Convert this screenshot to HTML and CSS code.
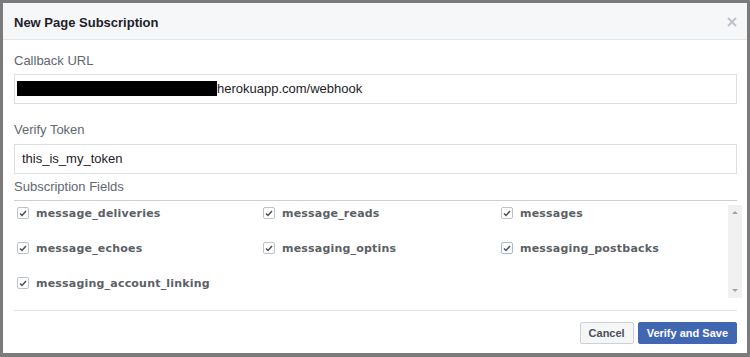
FILE: index.html
```html
<!DOCTYPE html>
<html lang="en">
<head>
    <meta charset="UTF-8">
    <title>New Page Subscription</title>
    <link rel="stylesheet" href="styles.css">
</head>
<body>
    <div class="dialog">
        <div class="dialog-header">
            <h1>New Page Subscription</h1>
            <svg class="close" width="10" height="10" viewBox="0 0 10 10">
                <path d="M1 1L9 9M9 1L1 9" stroke="#bec2c9" stroke-width="2"/>
            </svg>
        </div>

        <div class="dialog-body">
            <label class="field-label first">Callback URL</label>
            <div class="text-input"><span class="redacted"></span>herokuapp.com/webhook</div>

            <label class="field-label token">Verify Token</label>
            <div class="text-input">this_is_my_token</div>

            <div class="section-label">Subscription Fields</div>

            <div class="fields-scroll">
                <div class="fields-grid">
                    <div class="field"><span class="checkbox"><svg width="8" height="7" viewBox="0 0 8 7"><path d="M1 3.5L3 5.5L7 1" fill="none" stroke="#4b4f56" stroke-width="1.5"/></svg></span>message_deliveries</div>
                    <div class="field"><span class="checkbox"><svg width="8" height="7" viewBox="0 0 8 7"><path d="M1 3.5L3 5.5L7 1" fill="none" stroke="#4b4f56" stroke-width="1.5"/></svg></span>message_reads</div>
                    <div class="field"><span class="checkbox"><svg width="8" height="7" viewBox="0 0 8 7"><path d="M1 3.5L3 5.5L7 1" fill="none" stroke="#4b4f56" stroke-width="1.5"/></svg></span>messages</div>
                    <div class="field"><span class="checkbox"><svg width="8" height="7" viewBox="0 0 8 7"><path d="M1 3.5L3 5.5L7 1" fill="none" stroke="#4b4f56" stroke-width="1.5"/></svg></span>message_echoes</div>
                    <div class="field"><span class="checkbox"><svg width="8" height="7" viewBox="0 0 8 7"><path d="M1 3.5L3 5.5L7 1" fill="none" stroke="#4b4f56" stroke-width="1.5"/></svg></span>messaging_optins</div>
                    <div class="field"><span class="checkbox focused"><svg width="8" height="7" viewBox="0 0 8 7"><path d="M1 3.5L3 5.5L7 1" fill="none" stroke="#4b4f56" stroke-width="1.5"/></svg></span>messaging_postbacks</div>
                    <div class="field"><span class="checkbox"><svg width="8" height="7" viewBox="0 0 8 7"><path d="M1 3.5L3 5.5L7 1" fill="none" stroke="#4b4f56" stroke-width="1.5"/></svg></span>messaging_account_linking</div>
                </div>
                <div class="scrollbar">
                    <span class="arrow up"></span>
                    <span class="arrow down"></span>
                </div>
            </div>
        </div>

        <div class="dialog-footer">
            <button class="btn">Cancel</button>
            <button class="btn primary">Verify and Save</button>
        </div>
    </div>
</body>
</html>
```

FILE: styles.css
```css
* {
    box-sizing: border-box;
    margin: 0;
    padding: 0;
}

body {
    background: #7b7b7b;
    padding: 3px 3px 4px 3px;
    font-family: "Liberation Sans", Arial, sans-serif;
    color: #4b4f56;
}

.dialog {
    background: #fff;
    height: 350px;
    display: flex;
    flex-direction: column;
}

.dialog-header {
    height: 37px;
    background: #f6f7f9;
    border-bottom: 1px solid #e5e5e5;
    display: flex;
    align-items: center;
    justify-content: space-between;
    padding: 0 10px 0 11px;
}

.dialog-header h1 {
    font-size: 13px;
    font-weight: bold;
    color: #1d2129;
    margin-top: 2px;
}

.close {
    margin-top: 2px;
}

.dialog-body {
    padding: 0 10px 0 11px;
    flex: 1;
}

.field-label {
    display: block;
    font-size: 13px;
    line-height: 18px;
    color: #606770;
}

.field-label.first {
    margin-top: 12px;
}

.field-label.token {
    margin-top: 17px;
}

.text-input {
    height: 30px;
    margin-top: 4px;
    border: 1px solid #dddfe2;
    padding: 0 7px;
    font-size: 13px;
    line-height: 28px;
    color: #1d2129;
    white-space: nowrap;
}

.token + .text-input {
    margin-top: 5px;
}

.redacted {
    display: inline-block;
    width: 200px;
    height: 15px;
    margin-left: -5px;
    background: #000;
    vertical-align: -3px;
}

.section-label {
    margin-top: 4px;
    font-size: 13px;
    line-height: 18px;
    padding-bottom: 4px;
    border-bottom: 1px solid #ccd0d5;
    color: #606770;
}

.fields-scroll {
    display: flex;
    height: 98px;
    margin-right: -5px;
}

.fields-grid {
    flex: 1;
    display: grid;
    grid-template-columns: 246px 238px 1fr;
    grid-auto-rows: 18px;
    row-gap: 17px;
    padding: 3px 0 0 3px;
}

.field {
    display: flex;
    align-items: center;
    gap: 7px;
    font-family: "DejaVu Sans", Verdana, sans-serif;
    font-size: 11px;
    font-weight: bold;
    letter-spacing: 0.2px;
    color: #5b5f66;
}

.checkbox {
    width: 12px;
    height: 12px;
    border: 1px solid #bec3c9;
    border-radius: 2px;
    background: #fff;
    display: flex;
    align-items: center;
    justify-content: center;
}

.checkbox.focused {
    border-color: #a9b9e0;
}

.scrollbar {
    width: 14px;
    margin-top: 4px;
    margin-bottom: 1px;
    background: #f1f1f1;
    display: flex;
    flex-direction: column;
    justify-content: space-between;
    align-items: center;
    padding: 6px 0;
}

.arrow {
    width: 0;
    height: 0;
    border-left: 3px solid transparent;
    border-right: 3px solid transparent;
}

.arrow.up {
    border-bottom: 3px solid #a3a3a3;
}

.arrow.down {
    border-top: 3px solid #a3a3a3;
}

.dialog-footer {
    margin: 0 10px 0 11px;
    border-top: 1px solid #e5e5e5;
    padding: 11px 0 9px;
    display: flex;
    justify-content: flex-end;
    gap: 4px;
}

.btn {
    height: 22px;
    padding: 0 8px;
    border: 1px solid #ced0d4;
    border-radius: 2px;
    background: #f5f6f7;
    color: #4b4f56;
    font-family: "Liberation Sans", Arial, sans-serif;
    font-size: 11px;
    font-weight: bold;
}

.btn.primary {
    background: #4267b2;
    border-color: #4267b2;
    color: #fff;
}
```
